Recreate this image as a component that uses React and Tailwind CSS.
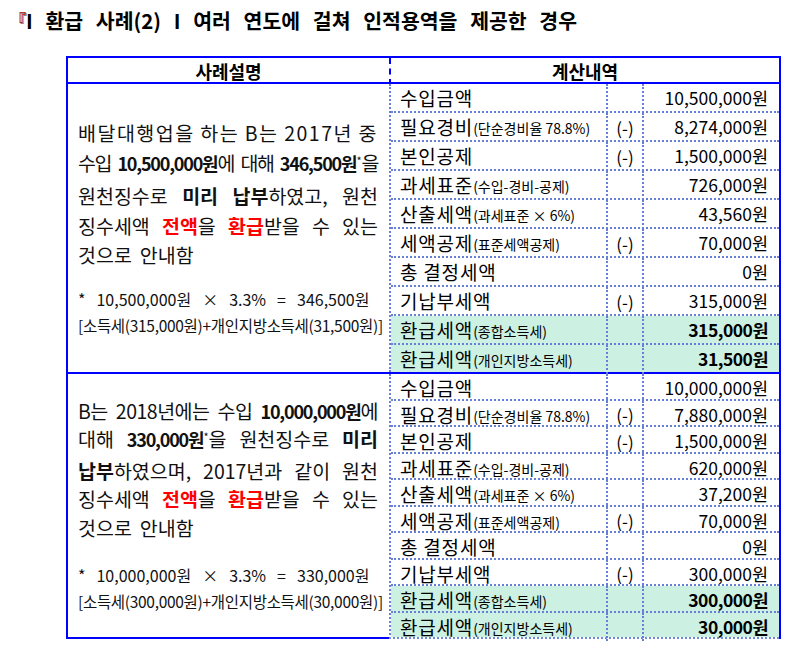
import React from 'react';

const rows1 = [
    { label: '수입금액', amt: '10,500,000원' },
    { label: '필요경비', sub: '(단순경비율 78.8%)', minus: true, amt: '8,274,000원' },
    { label: '본인공제', minus: true, amt: '1,500,000원' },
    { label: '과세표준', sub: '(수입-경비-공제)', amt: '726,000원' },
    { label: '산출세액', sub: '(과세표준 × 6%)', amt: '43,560원' },
    { label: '세액공제', sub: '(표준세액공제)', minus: true, amt: '70,000원' },
    { label: '총 결정세액', amt: '0원' },
    { label: '기납부세액', minus: true, amt: '315,000원' },
    { label: '환급세액', sub: '(종합소득세)', amt: '315,000원', hl: true },
    { label: '환급세액', sub: '(개인지방소득세)', amt: '31,500원', hl: true },
];

const rows2 = [
    { label: '수입금액', amt: '10,000,000원' },
    { label: '필요경비', sub: '(단순경비율 78.8%)', minus: true, amt: '7,880,000원' },
    { label: '본인공제', minus: true, amt: '1,500,000원' },
    { label: '과세표준', sub: '(수입-경비-공제)', amt: '620,000원' },
    { label: '산출세액', sub: '(과세표준 × 6%)', amt: '37,200원' },
    { label: '세액공제', sub: '(표준세액공제)', minus: true, amt: '70,000원' },
    { label: '총 결정세액', amt: '0원' },
    { label: '기납부세액', minus: true, amt: '300,000원' },
    { label: '환급세액', sub: '(종합소득세)', amt: '300,000원', hl: true },
    { label: '환급세액', sub: '(개인지방소득세)', amt: '30,000원', hl: true },
];

// bold amounts in the text are set tighter, like the original
const N = ({ children }) => <span className="font-bold text-[18px] tracking-[-1.2px]">{children}</span>;
const B = ({ children }) => <span className="font-bold">{children}</span>;
const R = ({ children }) => <span className="font-bold text-[#ff0000]">{children}</span>;
const Star = () => <span className="relative -top-[6px] text-[11px] tracking-normal">*</span>;

// one justified line of the description, words spread edge to edge
const Line = ({ children, last, track = '' }) => (
    <div className={`flex whitespace-nowrap ${track} ${last ? 'gap-[8px]' : 'justify-between'}`}>{children}</div>
);

function CalcRow({ row, isLast, h }) {
    return (
        <div className={`grid grid-cols-[215px_36px_1fr] ${h} ${isLast ? '' : 'border-b-2 border-dotted border-[#6680d8]'} ${row.hl ? 'bg-[#ccf0e2]' : ''}`}>
            <div className="flex items-center pl-[9px] whitespace-nowrap">
                <span className="text-[19px] tracking-[0.8px]">{row.label}</span>
                {row.sub && <span className="text-[14px] mt-[3px]">{row.sub}</span>}
            </div>
            <div className="flex items-center justify-center border-l-2 border-dotted border-[#6680d8] text-[17px]">
                {row.minus ? '(-)' : ''}
            </div>
            <div className={`flex items-center justify-end pr-[11px] border-l-2 border-dotted border-[#6680d8] text-[17.5px] ${row.hl ? 'font-bold tracking-[-0.5px]' : ''}`}>
                {row.amt}
            </div>
        </div>
    );
}

function Footnote({ a, b, c, d, gap }) {
    return (
        <div className={`text-[#111] ${gap}`}>
            <div className="flex gap-[11px] text-[16px] leading-[26px] whitespace-nowrap">
                <span>*</span><span>{a}</span><span>×</span><span>3.3%</span><span>=</span><span>{b}</span>
            </div>
            <div className="text-[15.5px] leading-[26px] tracking-[-0.3px] whitespace-nowrap">
                [소득세({c})+개인지방소득세({d})]
            </div>
        </div>
    );
}

export default function App() {
    return (
        <div className="w-[800px] h-[652px] bg-white text-black font-['Noto_Sans_CJK_KR','Noto_Sans',sans-serif] overflow-hidden">
            <div className="pt-[7px] pl-[17px] h-[56px]">
                <h1 className="text-[20.5px] font-bold leading-[26px] [word-spacing:8px] whitespace-nowrap">
                    <span className="relative -top-[3px] text-[16px] text-[#b00000] ml-[-7px] [word-spacing:0] [text-shadow:1px_1px_0_#777]">『</span>I 환급 사례(2) I 여러 연도에 걸쳐 인적용역을 제공한 경우
                </h1>
            </div>

            <div className="ml-[66px] w-[715px] border-t-2 border-x-2 border-[#0000ff]">
                {/* header */}
                <div className="grid grid-cols-[321px_1fr] h-[26px] border-b-2 border-[#0000ff] font-bold text-[18px]">
                    <div className="flex items-center justify-center">사례설명</div>
                    <div className="flex items-center justify-center border-l-2 border-dashed border-[#0000ff]">계산내역</div>
                </div>

                {/* case 1 */}
                <div className="grid grid-cols-[321px_1fr] border-b-2 border-[#0000ff]">
                    <div className="flex flex-col justify-center pl-[10px] pr-[11px]">
                        <div className="text-[19.5px] leading-[29.5px] text-[#111]">
                            <Line track="tracking-[1.5px]"><span>배달대행업을</span><span>하는</span><span>B는</span><span>2017년</span><span>중</span></Line>
                            <Line track="tracking-[-1.5px]"><span>수입</span><span><N>10,500,000원</N>에</span><span>대해</span><span><N>346,500원</N><Star />을</span></Line>
                            <Line><span>원천징수로</span><B>미리</B><span><B>납부</B>하였고,</span><span>원천</span></Line>
                            <Line><span>징수세액</span><span><R>전액</R>을</span><span><R>환급</R>받을</span><span>수</span><span>있는</span></Line>
                            <Line last><span>것으로</span><span>안내함</span></Line>
                        </div>
                        <Footnote a="10,500,000원" b="346,500원" c="315,000원" d="31,500원" gap="mt-[16px]" />
                    </div>
                    <div className="border-l-2 border-dotted border-[#6680d8]">
                        {rows1.map((r, i) => (
                            <CalcRow key={i} row={r} isLast={i === rows1.length - 1} h={i === rows1.length - 1 ? 'h-[27px]' : 'h-[29px]'} />
                        ))}
                    </div>
                </div>

                {/* case 2 */}
                <div className="grid grid-cols-[321px_1fr]">
                    <div className="flex flex-col justify-center pl-[10px] pr-[11px] border-b-2 border-[#0000ff]">
                        <div className="text-[19.5px] leading-[28.5px] text-[#111]">
                            <Line track="tracking-[-0.5px]"><span>B는</span><span>2018년에는</span><span>수입</span><span><N>10,000,000원</N>에</span></Line>
                            <Line><span>대해</span><span><N>330,000원</N><Star />을</span><span>원천징수로</span><B>미리</B></Line>
                            <Line><span><B>납부</B>하였으며,</span><span>2017년과</span><span>같이</span><span>원천</span></Line>
                            <Line><span>징수세액</span><span><R>전액</R>을</span><span><R>환급</R>받을</span><span>수</span><span>있는</span></Line>
                            <Line last><span>것으로</span><span>안내함</span></Line>
                        </div>
                        <Footnote a="10,000,000원" b="330,000원" c="300,000원" d="30,000원" gap="mt-[20px]" />
                    </div>
                    <div className="border-l-2 border-dotted border-[#6680d8] border-b-2 border-b-solid border-b-[#6f8ad8]">
                        {rows2.map((r, i) => (
                            <CalcRow key={i} row={r} isLast={i === rows2.length - 1} h={i === rows2.length - 1 ? 'h-[24.5px]' : 'h-[26.5px]'} />
                        ))}
                    </div>
                </div>
            </div>
        </div>
    );
}
